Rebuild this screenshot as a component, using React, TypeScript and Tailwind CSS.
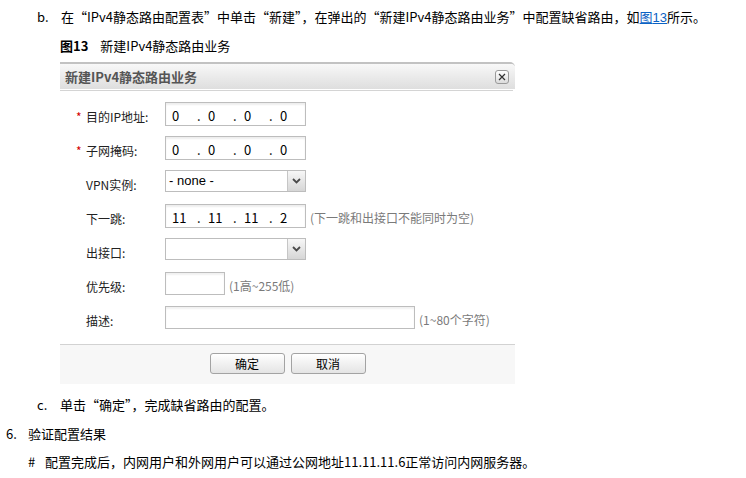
import { Fragment, ReactNode } from "react";

const cjk = "font-['Noto_Sans_CJK_SC',sans-serif]";

function IpInput({ parts }: { parts: string[] }) {
  return (
    <div className="flex h-[24px] w-[141px] items-center border border-[#bdbdbd] bg-white pl-[6px] pt-[4px] text-[13px] text-black shadow-[inset_0_2px_2px_rgba(0,0,0,0.07)]">
      {parts.map((p, i) => (
        <Fragment key={i}>
          {i > 0 && <span className="w-[11px]">.</span>}
          <span className="w-[25px]">{p}</span>
        </Fragment>
      ))}
    </div>
  );
}

function Chevron() {
  return (
    <svg width="9" height="6" viewBox="0 0 9 6">
      <path d="M1 1 L4.5 4.5 L8 1" fill="none" stroke="#4a4a4a" strokeWidth="1.8" />
    </svg>
  );
}

function Select({ value }: { value?: string }) {
  return (
    <div className="flex h-[22px] w-[141px] border border-[#bdbdbd] bg-white">
      <span className="flex-1 pl-[3px] font-['Liberation_Sans',sans-serif] text-[13px] leading-[20px] text-black">
        {value}
      </span>
      <span className="flex w-[18px] items-center justify-center border-l border-[#c6c6c6] bg-linear-to-b from-[#f7f7f7] to-[#d6d6d6]">
        <Chevron />
      </span>
    </div>
  );
}

function TextBox({ width }: { width: string }) {
  return <div className={`h-[23px] border border-[#bdbdbd] bg-white shadow-[inset_0_2px_2px_rgba(0,0,0,0.06)] ${width}`} />;
}

function Row({
  label,
  required,
  hint,
  children,
}: {
  label: string;
  required?: boolean;
  hint?: string;
  children: ReactNode;
}) {
  return (
    <div className="flex h-[34px] items-start pl-[16px]">
      <span className="w-[10px] pt-[6px] text-[12px] leading-[18px] text-[#d40000]">{required ? "*" : ""}</span>
      <span className="w-[79px] pt-[6px] text-[12px] leading-[18px] text-[#222]">{label}</span>
      {children}
      {hint && <span className="ml-[4px] pt-[5px] text-[12px] leading-[18px] text-[#7a7a7a]">{hint}</span>}
    </div>
  );
}

function Dialog() {
  return (
    <div className={`ml-[60px] mt-[7px] w-[455px] bg-white ${cjk}`}>
      {/* Header */}
      <div className="rounded-tr-[5px] border-t-2 border-[#c2c2c2]">
        <div className="flex h-[25px] items-center justify-between rounded-tr-[4px] bg-linear-to-b from-[#f8f8f8] to-[#dedede] pl-[5px] pr-[6px]">
          <span className="text-[13px] font-bold text-[#555]">新建IPv4静态路由业务</span>
          <span className="flex h-[14px] w-[14px] items-center justify-center rounded-[3px] border border-[#9a9a9a] bg-linear-to-b from-white to-[#dcdcdc]">
            <svg width="8" height="8" viewBox="0 0 8 8">
              <path d="M1 1 L7 7 M7 1 L1 7" stroke="#333" strokeWidth="1.2" />
            </svg>
          </span>
        </div>
        <div className="h-[1px] bg-white" />
        <div className="mr-[2px] h-[1px] bg-[#d4d4d4]" />
      </div>

      {/* Body */}
      <div className="pb-[4px] pt-[11px]">
        <Row label="目的IP地址:" required>
          <IpInput parts={["0", "0", "0", "0"]} />
        </Row>
        <Row label="子网掩码:" required>
          <IpInput parts={["0", "0", "0", "0"]} />
        </Row>
        <Row label="VPN实例:">
          <Select value="- none -" />
        </Row>
        <Row label="下一跳:" hint="(下一跳和出接口不能同时为空)">
          <IpInput parts={["11", "11", "11", "2"]} />
        </Row>
        <Row label="出接口:">
          <Select />
        </Row>
        <Row label="优先级:" hint="(1高~255低)">
          <TextBox width="w-[60px]" />
        </Row>
        <Row label="描述:" hint="(1~80个字符)">
          <TextBox width="w-[250px]" />
        </Row>
      </div>

      {/* Footer */}
      <div className="flex h-[40px] justify-center gap-[6px] border-t border-[#d2d2d2] bg-[#f7f7f7] pt-[8px]">
        {["确定", "取消"].map((t) => (
          <button
            key={t}
            className="h-[21px] w-[75px] rounded-[3px] border border-[#a3a3a3] bg-linear-to-b from-white to-[#e4e4e4] text-[12px] leading-[19px] text-black"
          >
            {t}
          </button>
        ))}
      </div>
    </div>
  );
}

export default function App() {
  return (
    <div lang="zh-CN" className={`h-[478px] w-[746px] overflow-hidden bg-white pt-[8px] text-[13px] leading-[18px] text-black ${cjk}`}>
      <div className="ml-[37px] flex h-[18px]">
        <span className="w-[24px]">b.</span>
        <span>
          在“IPv4静态路由配置表”中单击“新建”，在弹出的“新建IPv4静态路由业务”中配置缺省路由，如
          <span className="text-[#0b62c4] underline">
            图<span className="font-['Liberation_Sans',sans-serif]">13</span>
          </span>
          所示。
        </span>
      </div>

      <div className="ml-[60px] mt-[11px] flex h-[18px]">
        <span className="mr-[12px] font-bold">图13</span>
        <span>新建IPv4静态路由业务</span>
      </div>

      <Dialog />

      <div className="ml-[37px] mt-[12px] flex h-[18px]">
        <span className="w-[23px]">c.</span>
        <span>单击“确定”，完成缺省路由的配置。</span>
      </div>

      <div className="ml-[6px] mt-[11px] flex h-[18px]">
        <span className="w-[22px]">6.</span>
        <span>验证配置结果</span>
      </div>

      <div className="ml-[28px] mt-[10px] flex h-[18px]">
        <span className="w-[17px]">#</span>
        <span>配置完成后，内网用户和外网用户可以通过公网地址11.11.11.6正常访问内网服务器。</span>
      </div>
    </div>
  );
}
